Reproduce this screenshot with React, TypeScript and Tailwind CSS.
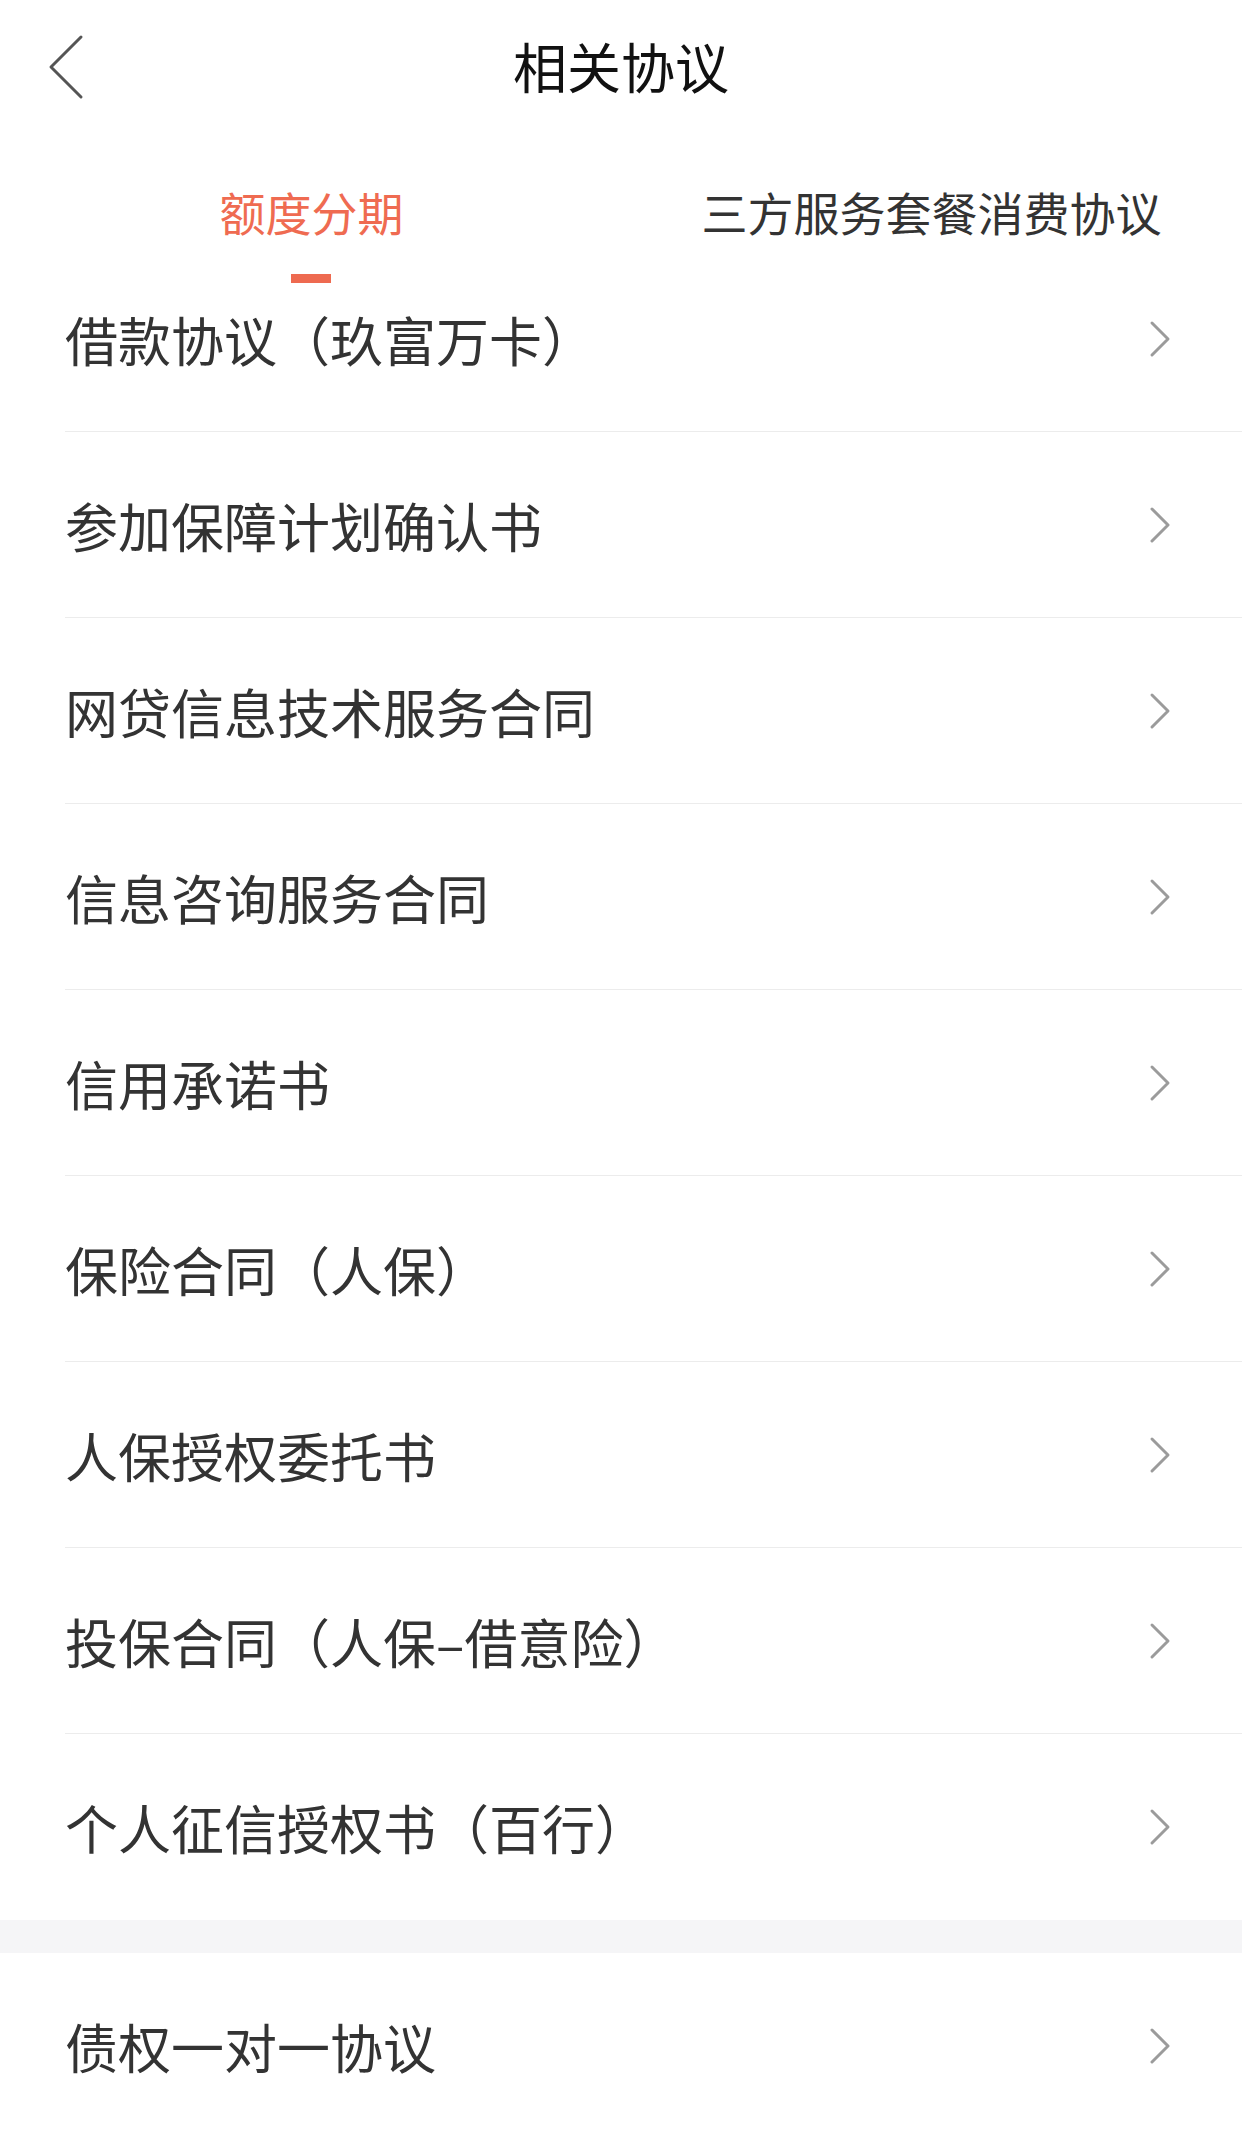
import React from "react";

const rows = [
  "参加保障计划确认书",
  "网贷信息技术服务合同",
  "信息咨询服务合同",
  "信用承诺书",
  "保险合同（人保）",
  "人保授权委托书",
  "投保合同（人保–借意险）",
  "个人征信授权书（百行）",
];

function Chevron() {
  return (
    <svg width="22" height="38" viewBox="0 0 22 38" className="shrink-0">
      <path d="M3 3 L19 19 L3 35" fill="none" stroke="#9b9b9b" strokeWidth="3" strokeLinecap="round" strokeLinejoin="round" />
    </svg>
  );
}

export default function App() {
  const font = { fontFamily: '"Noto Sans CJK SC", "Noto Sans", sans-serif' };
  return (
    <div className="w-[1242px] h-[2139px] overflow-hidden bg-white" style={font}>
      {/* Nav bar */}
      <div className="relative h-[130px] flex items-start justify-center">
        <svg width="40" height="66" viewBox="0 0 40 66" className="absolute left-[45px] top-[34px]">
          <path d="M36 3 L6 33 L36 63" fill="none" stroke="#555" strokeWidth="3" strokeLinecap="round" strokeLinejoin="round" />
        </svg>
        <div className="mt-[37px] text-[54px] leading-[58px] text-[#111]">相关协议</div>
      </div>
      {/* Tabs */}
      <div className="h-[159px] flex">
        <div className="flex-1 flex flex-col items-center pt-[58px]">
          <div className="text-[46px] leading-[46px] text-[#ef6b51] pl-[2px]">额度分期</div>
          <div className="mt-[40px] w-[40px] h-[9px] bg-[#ee6a50]" />
        </div>
        <div className="flex-1 flex flex-col items-center pt-[58px]">
          <div className="text-[46px] leading-[46px] text-[#333]">三方服务套餐消费协议</div>
        </div>
      </div>
      {/* List */}
      <div className="pl-[65px]">
        <div className="h-[143px] border-b border-[#ececec] flex items-center pb-[42px] pr-[71px]">
          <div className="flex-1 text-[53px] leading-[60px] text-[#333]">借款协议（玖富万卡）</div>
          <Chevron />
        </div>
        {rows.map((r, i) => (
          <div
            key={r}
            className={
              i === rows.length - 1
                ? "h-[186px] flex items-center pr-[71px]"
                : "h-[186px] border-b border-[#ececec] flex items-center pr-[71px]"
            }
          >
            <div className="flex-1 text-[53px] leading-[60px] text-[#333]">{r}</div>
            <Chevron />
          </div>
        ))}
      </div>
      <div className="h-[33px] bg-[#f5f5f7]" />
      <div className="pl-[65px]">
        <div className="h-[186px] flex items-center pr-[71px]">
          <div className="flex-1 text-[53px] leading-[60px] text-[#333]">债权一对一协议</div>
          <Chevron />
        </div>
      </div>
    </div>
  );
}
